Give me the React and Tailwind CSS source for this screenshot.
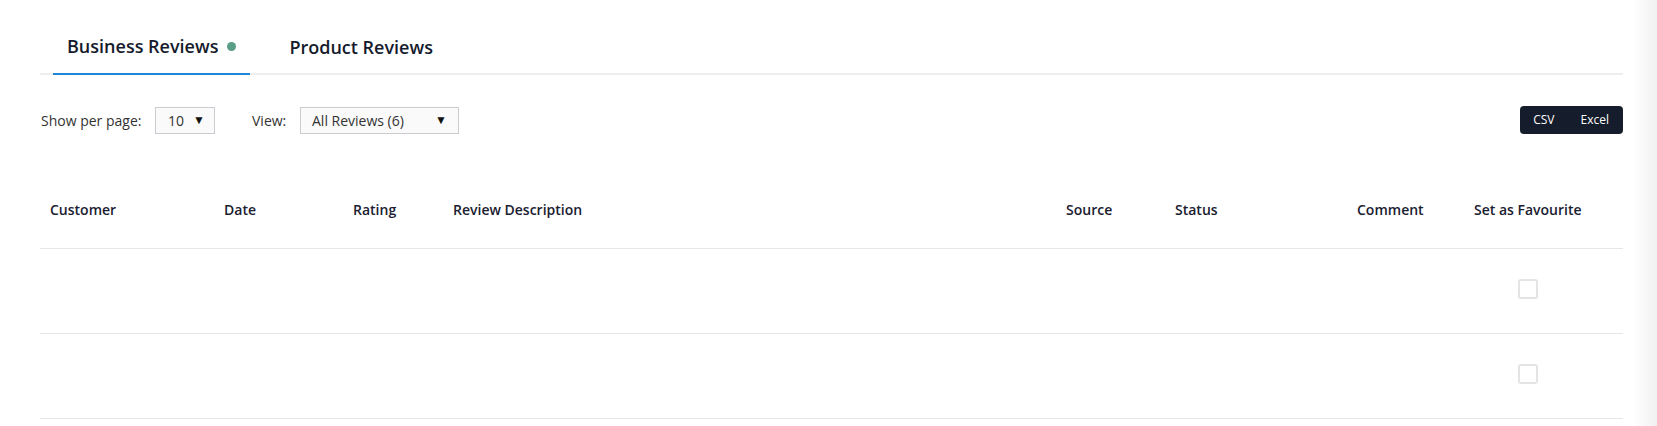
import React from "react";

const cols = "grid grid-cols-[174px_129px_100px_613px_109px_182px_117px_1fr]";

function Checkbox() {
  return <div className="mb-[4px] ml-[44px] h-[20px] w-[20px] rounded-[3px] border-2 border-[#e4e4e4] bg-white" />;
}

export default function App() {
  const headers = ["Customer", "Date", "Rating", "Review Description", "Source", "Status", "Comment", "Set as Favourite"];
  return (
    <div className="flex min-h-[426px] bg-white font-['Open_Sans',sans-serif] text-[#333]">
      <div className="flex-1 pl-[40px] pr-[10px] pt-[20px]">
        {/* Tabs */}
        <div className="flex border-b-2 border-[#eeeeee]">
          <div className="-mb-[2px] ml-[13px] flex h-[55px] items-center border-b-2 border-[#2185d8] px-[14px] text-[18px] font-semibold text-[#151b2c]">
            Business Reviews
            <span className="ml-[9px] inline-block h-[9px] w-[9px] rounded-full bg-[#5a9e89]" />
          </div>
          <div className="-mb-[2px] ml-[25px] flex h-[55px] items-center px-[14px] text-[18px] font-semibold text-[#151b2c]">
            Product Reviews
          </div>
        </div>

        {/* Controls */}
        <div className="mt-[31px] flex h-[28px] items-center text-[14px]">
          <span className="w-[115px] pl-[1px]">Show per page:</span>
          <div className="flex h-[27px] w-[60px] items-center justify-between border border-[#c9cdd2] bg-[#fafafa] pl-[12px] pr-[9px]">
            <span>10</span>
            <span className="text-[12px] text-[#111]">▼</span>
          </div>
          <span className="ml-[37px] w-[48px]">View:</span>
          <div className="flex h-[27px] w-[159px] items-center justify-between border border-[#c9cdd2] bg-[#fafafa] pl-[11px] pr-[11px]">
            <span>All Reviews (6)</span>
            <span className="text-[12px] text-[#111]">▼</span>
          </div>
          <div className="ml-auto flex h-[28px] items-center rounded-[4px] bg-[#151c2b] text-[12px] font-medium text-white">
            <span className="pl-[13px] pr-[14px]">CSV</span>
            <span className="pl-[12px] pr-[14px]">Excel</span>
          </div>
        </div>

        {/* Table */}
        <div className="mt-[36px]">
          <div className={`${cols} h-[79px] items-center border-b border-[#e6e6e6] text-[14px] font-semibold text-[#1a2030]`}>
            {headers.map((h) => (
              <div key={h} className="pl-[10px]">{h}</div>
            ))}
          </div>
          {[0, 1].map((r) => (
            <div key={r} className={`${cols} h-[85px] items-center border-b border-[#e6e6e6]`}>
              <div />
              <div />
              <div />
              <div />
              <div />
              <div />
              <div />
              <div className="pl-[10px]">
                <Checkbox />
              </div>
            </div>
          ))}
        </div>
      </div>
      <div className="w-[24px] bg-gradient-to-r from-white to-[#f1f1f1]" />
    </div>
  );
}
